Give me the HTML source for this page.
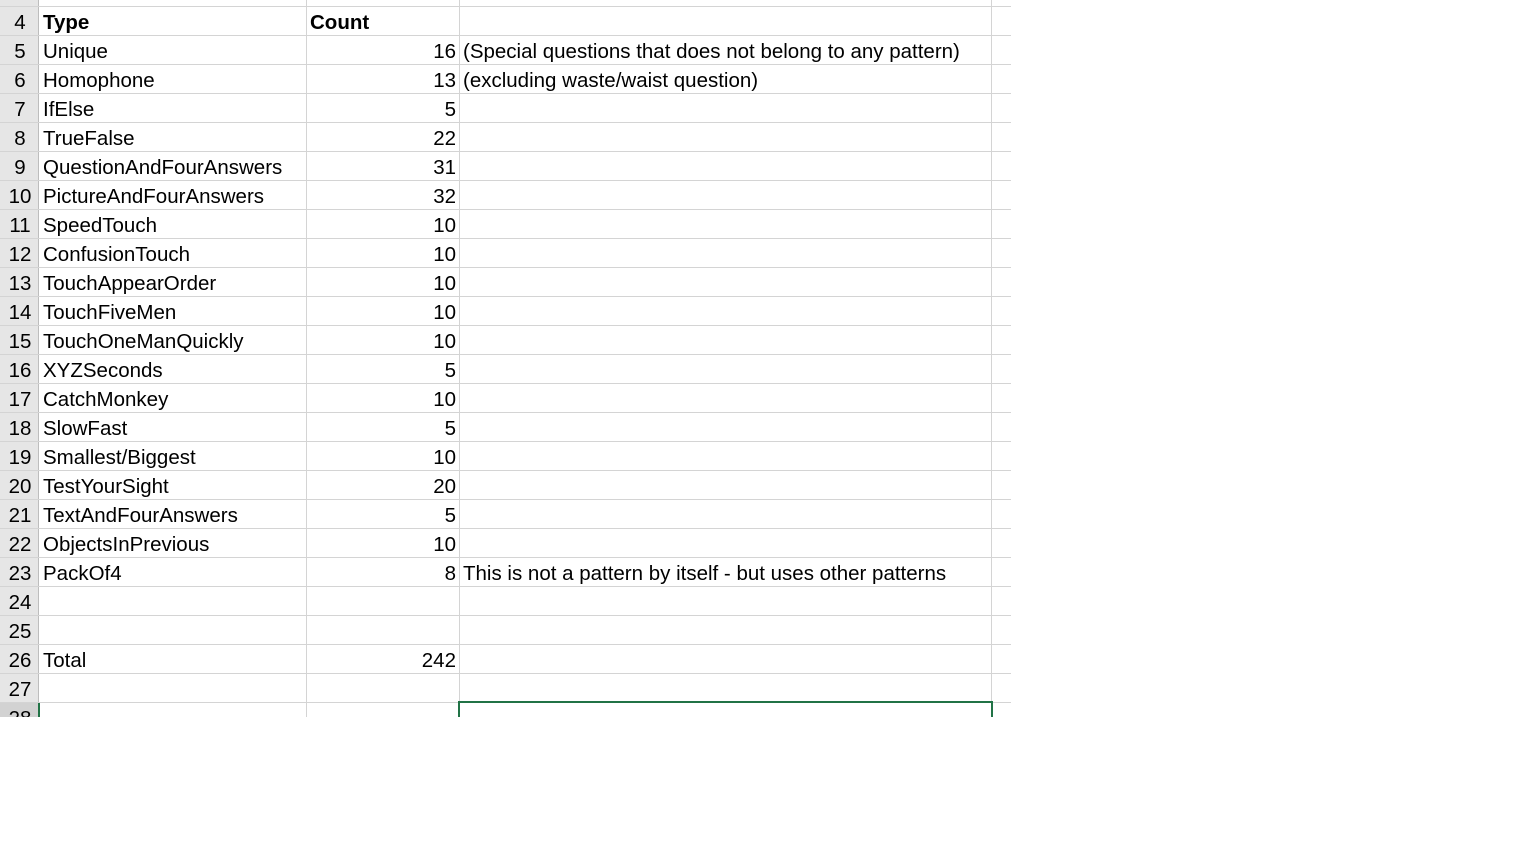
<!DOCTYPE html>
<html><head><meta charset="utf-8"><style>
body{margin:0;width:1536px;height:864px;background:#fff;overflow:hidden;font-family:"Liberation Sans",sans-serif;}
#g{position:absolute;left:0;top:0;width:1011px;height:717px;overflow:hidden;}
.hdr{position:absolute;left:0;top:0;width:38px;height:717px;background:#e6e6e6;border-right:1px solid #bdbdbd;}
.h{position:absolute;left:0;width:1011px;height:1px;background:#d4d4d4;}
.v{position:absolute;top:0;width:1px;height:717px;background:#d4d4d4;}
.t{position:absolute;font-size:20.5px;line-height:29px;color:#000;white-space:nowrap;}
.n{left:1px;width:38px;text-align:center;}
.a{left:43px;}
.b{left:306px;width:150px;text-align:right;}
.c{left:463px;}
</style></head><body>
<div id="g">
<div class="hdr"></div>
<div style="position:absolute;left:0;top:703px;width:38px;height:14px;background:#d2d2d2"></div>
<div style="position:absolute;left:38px;top:703px;width:2px;height:14px;background:#217346"></div>
<div class="v" style="left:306px"></div>
<div class="v" style="left:459px"></div>
<div class="v" style="left:991px"></div>
<div id="rows"></div>
<div style="position:absolute;left:458px;top:701px;width:531px;height:16px;border:2px solid #217346;border-bottom:none;"></div>
</div>
<script>
var d=[["Type","Count","",1],["Unique","16","(Special questions that does not belong to any pattern)"],["Homophone","13","(excluding waste/waist question)"],["IfElse","5",""],["TrueFalse","22",""],["QuestionAndFourAnswers","31",""],["PictureAndFourAnswers","32",""],["SpeedTouch","10",""],["ConfusionTouch","10",""],["TouchAppearOrder","10",""],["TouchFiveMen","10",""],["TouchOneManQuickly","10",""],["XYZSeconds","5",""],["CatchMonkey","10",""],["SlowFast","5",""],["Smallest/Biggest","10",""],["TestYourSight","20",""],["TextAndFourAnswers","5",""],["ObjectsInPrevious","10",""],["PackOf4","8","This is not a pattern by itself - but uses other patterns"],["","",""],["","",""],["Total","242",""],["","",""],["","",""]];
var h="";
for(var i=0;i<25;i++){var y=6+29*i;h+='<div class="h" style="top:'+y+'px"></div>';
var r=d[i];var ty=y+2;var fw=r[3]?'font-weight:bold;':'';
h+='<div class="t n" style="top:'+ty+'px">'+(i+4)+'</div>';
if(i<24){h+='<div class="t a" style="top:'+ty+'px;'+fw+'">'+r[0]+'</div>';
h+='<div class="t '+(r[3]?'a':'b')+'" style="top:'+ty+'px;'+fw+(r[3]?'left:310px;':'')+'">'+r[1]+'</div>';
h+='<div class="t c" style="top:'+ty+'px">'+r[2]+'</div>';}}
document.getElementById("rows").innerHTML=h;
</script>
</body></html>
